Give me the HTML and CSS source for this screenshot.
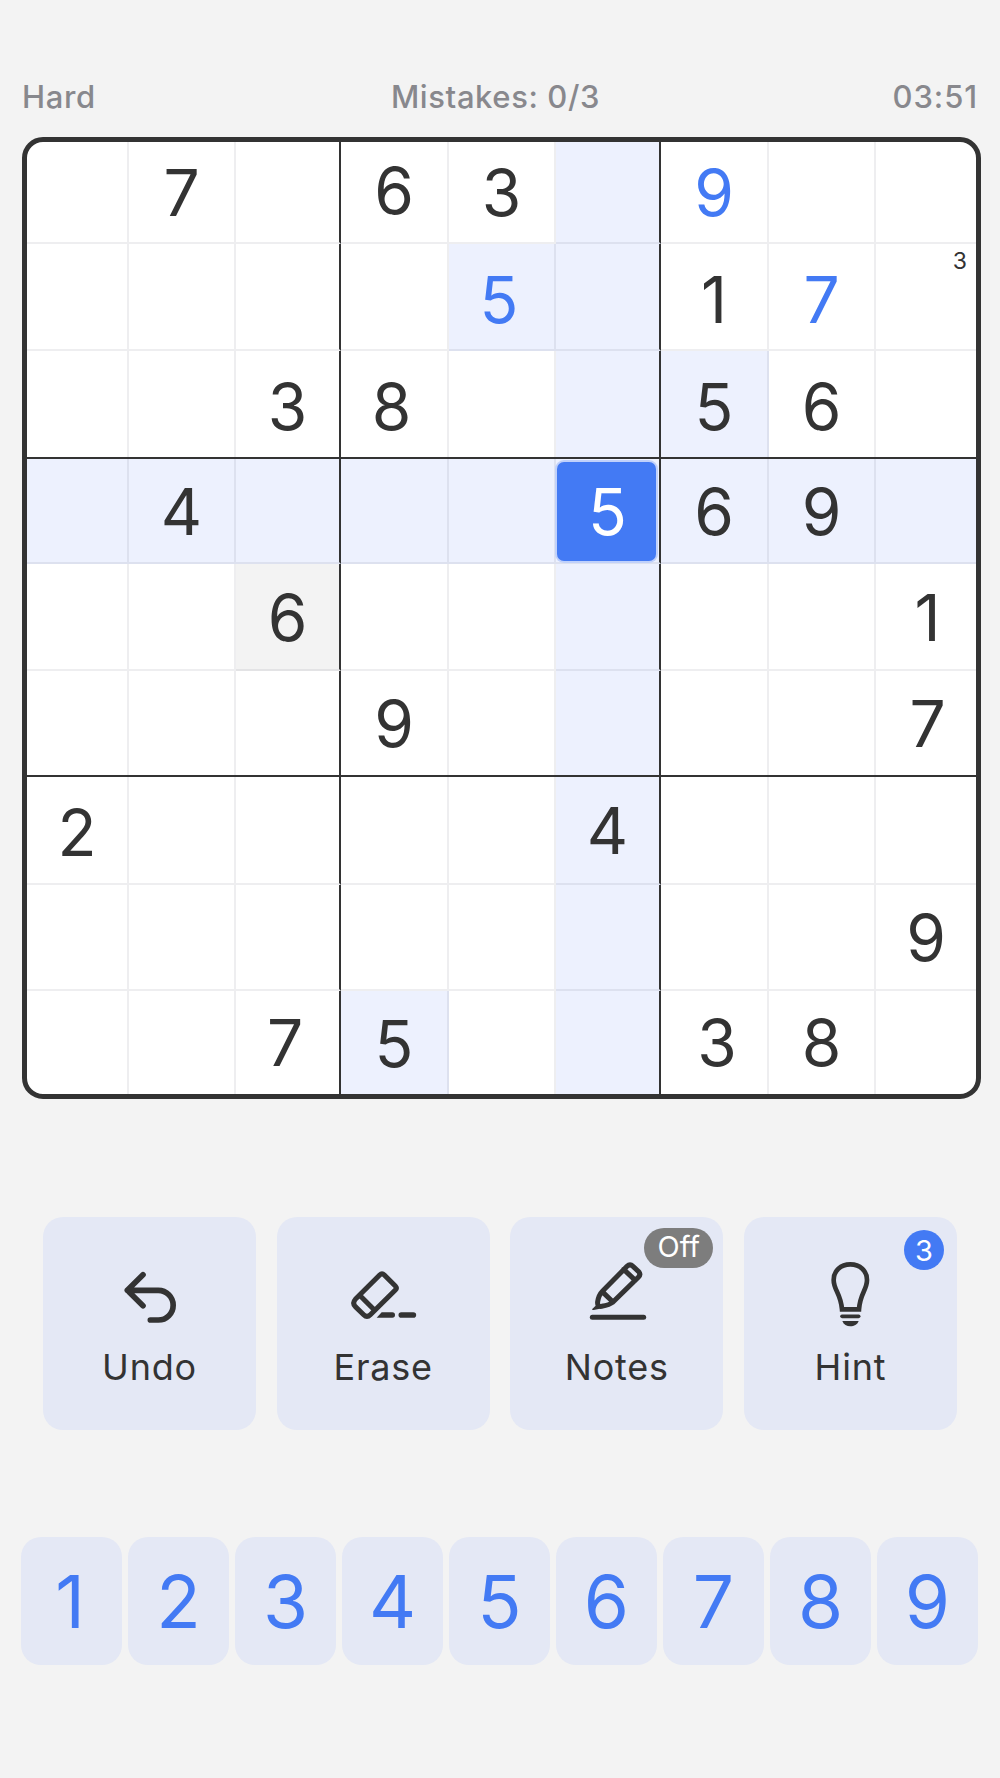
FILE: index.html
```html
<!DOCTYPE html>
<html lang="en">
  <head>
    <meta charset="utf-8">
    <title>Sudoku</title>
    <link rel="stylesheet" href="styles.css">
  </head>
  <body>
    <header class="status">
      <span class="level">Hard</span>
      <span class="mistakes">Mistakes: 0/3</span>
      <span class="timer">03:51</span>
    </header>

    <main class="board">
      <div class="row">
        <div class="cell"></div>
        <div class="cell">7</div>
        <div class="cell"></div>
        <div class="cell raised">6</div>
        <div class="cell">3</div>
        <div class="cell lit"></div>
        <div class="cell entered">9</div>
        <div class="cell"></div>
        <div class="cell"></div>
      </div>
      <div class="row low">
        <div class="cell"></div>
        <div class="cell"></div>
        <div class="cell"></div>
        <div class="cell"></div>
        <div class="cell entered lit left">5</div>
        <div class="cell lit"></div>
        <div class="cell">1</div>
        <div class="cell entered">7</div>
        <div class="cell noted"><span class="note">3</span></div>
      </div>
      <div class="row low">
        <div class="cell"></div>
        <div class="cell"></div>
        <div class="cell">3</div>
        <div class="cell left">8</div>
        <div class="cell"></div>
        <div class="cell lit"></div>
        <div class="cell lit">5</div>
        <div class="cell">6</div>
        <div class="cell"></div>
      </div>
      <div class="row">
        <div class="cell lit"></div>
        <div class="cell lit">4</div>
        <div class="cell lit"></div>
        <div class="cell lit"></div>
        <div class="cell lit"></div>
        <div class="cell lit"><span class="pick">5</span></div>
        <div class="cell lit">6</div>
        <div class="cell lit">9</div>
        <div class="cell lit"></div>
      </div>
      <div class="row">
        <div class="cell"></div>
        <div class="cell"></div>
        <div class="cell dim">6</div>
        <div class="cell"></div>
        <div class="cell"></div>
        <div class="cell lit"></div>
        <div class="cell"></div>
        <div class="cell"></div>
        <div class="cell edge">1</div>
      </div>
      <div class="row">
        <div class="cell"></div>
        <div class="cell"></div>
        <div class="cell"></div>
        <div class="cell">9</div>
        <div class="cell"></div>
        <div class="cell lit"></div>
        <div class="cell"></div>
        <div class="cell"></div>
        <div class="cell edge">7</div>
      </div>
      <div class="row">
        <div class="cell lowered">2</div>
        <div class="cell"></div>
        <div class="cell"></div>
        <div class="cell"></div>
        <div class="cell"></div>
        <div class="cell lit">4</div>
        <div class="cell"></div>
        <div class="cell"></div>
        <div class="cell"></div>
      </div>
      <div class="row">
        <div class="cell"></div>
        <div class="cell"></div>
        <div class="cell"></div>
        <div class="cell"></div>
        <div class="cell"></div>
        <div class="cell lit"></div>
        <div class="cell"></div>
        <div class="cell"></div>
        <div class="cell">9</div>
      </div>
      <div class="row last">
        <div class="cell"></div>
        <div class="cell"></div>
        <div class="cell left">7</div>
        <div class="cell lit lowered">5</div>
        <div class="cell"></div>
        <div class="cell lit"></div>
        <div class="cell right">3</div>
        <div class="cell">8</div>
        <div class="cell"></div>
      </div>
    </main>

    <nav class="tools">
      <button class="tool">
        <svg class="icon" viewBox="0 0 240 240">
          <path class="line wide" d="M99 59L52 106L99 152M52 106H145a44.5 44.5 0 0 1 0 89H121" />
        </svg>
        <span>Undo</span>
      </button>
      <button class="tool">
        <svg class="icon" viewBox="0 0 240 240">
          <path class="line" d="M110 60Q117 53 124 60L157 93Q163 99 157 105L82 179Q72 189 62 179L37 155Q27 144 37 133ZM50 121L95 166" />
          <path class="fill" d="M101 188L116 172H148a8 8 0 0 1 0 16Z" />
          <path class="line wide" d="M175 180H211" />
        </svg>
        <span>Erase</span>
      </button>
      <button class="tool">
        <svg class="icon" viewBox="0 0 240 240">
          <path class="line" d="M150 34Q159 25 168 34L184 49Q193 58 184 67L108 141Q98 150 74 154Q60 156 62 140Q65 120 77 108ZM140 43L175 76M78 112L108 141" />
          <path class="fill" d="M45 163L62 146L76 157Q62 166 47 165Z" />
          <path class="line" d="M46 187H200" />
        </svg>
        <span>Notes</span>
        <span class="badge off">Off</span>
      </button>
      <button class="tool">
        <svg class="icon" viewBox="0 0 240 240">
          <path class="line sharp" d="M96 163C92 115 71 105 71 75C71 47 92 28 121 28S171 47 171 75C171 105 150 115 147 163Z" />
          <path class="line thin" d="M96 184H146" />
          <path class="fill" d="M97 198H146C142 209 132 214 121 214S101 209 97 198Z" />
        </svg>
        <span>Hint</span>
        <span class="badge count">3</span>
      </button>
    </nav>

    <div class="keypad">
      <button class="key">1</button>
      <button class="key">2</button>
      <button class="key">3</button>
      <button class="key">4</button>
      <button class="key">5</button>
      <button class="key">6</button>
      <button class="key">7</button>
      <button class="key">8</button>
      <button class="key">9</button>
    </div>
  </body>
</html>
```
FILE: styles.css
```css
* {
  box-sizing: border-box;
}

body {
  margin: 0;
  height: 1778px;
  padding: 76px 21px 0 22px;
  background-color: #f3f3f3;
  color: #333333;
  font-family: Inter, "Liberation Sans", sans-serif;
  overflow: hidden;
}

button {
  border: 0;
  padding: 0;
  font: inherit;
  color: inherit;
}

.status {
  display: grid;
  grid-template-columns: 200px 1fr 200px;
  height: 61px;
  padding-right: 1px;
  color: #88888d;
  font-size: 31px;
  font-weight: 500;
  line-height: 41px;
  letter-spacing: 0.6px;
}

.mistakes {
  text-align: center;
  padding-right: 9px;
}

.timer {
  text-align: right;
  letter-spacing: 0.9px;
}

/* board */
.board {
  display: grid;
  grid-template-rows: 102px 107px 108px 105px 107px 106px 108px 106px 103px;
  width: 959px;
  border: 5px solid #333333;
  border-radius: 21px;
  background-color: #ffffff;
  overflow: hidden;
}

.row {
  display: grid;
  grid-template-columns: 102px 107px 105px 108px 107px 105px 108px 107px 100px;
}

.cell {
  display: flex;
  align-items: center;
  justify-content: center;
  padding-top: 2px;
  border-right: 2px solid rgba(40, 40, 60, 0.08);
  border-bottom: 2px solid rgba(40, 40, 60, 0.08);
  font-size: 64px;
  line-height: 64px;
}

.cell:nth-child(3),
.cell:nth-child(6) {
  border-right-color: #333333;
}

.cell:last-child {
  border-right: 0;
}

/* box edges run the full width, so the row draws them */
.row:nth-child(3),
.row:nth-child(6) {
  border-bottom: 2px solid #333333;
}

.row:nth-child(3) .cell,
.row:nth-child(6) .cell,
.row:last-child .cell {
  border-bottom: 0;
}

.low .cell {
  padding-top: 6px;
}

.last .cell {
  padding-top: 0;
}

.lit {
  background-color: #edf1fe;
}

.dim {
  background-color: #f3f3f3;
}

.entered {
  color: #437af4;
}

.left {
  padding-right: 5px;
}

.right {
  padding-left: 6px;
}

.edge {
  padding-left: 3px;
}

.raised {
  padding-top: 0;
  padding-bottom: 2px;
}

.lowered {
  padding-top: 6px;
}

.last .lowered {
  padding-top: 3px;
}

.low .noted {
  align-items: flex-start;
  justify-content: flex-end;
  padding: 6px 9px 0 0;
}

.note {
  font-size: 23px;
  line-height: 23px;
}

.pick {
  display: flex;
  align-items: center;
  justify-content: center;
  width: 99px;
  height: 99px;
  margin-right: 2px;
  padding-left: 2px;
  border-radius: 7px;
  background-color: #437af4;
  box-shadow: 0 0 0 2px #c0d1fb;
  color: #ffffff;
}

/* tools */
.tools {
  display: grid;
  grid-template-columns: repeat(4, 213px);
  justify-content: space-between;
  width: 914px;
  margin: 118px 0 0 21px;
}

.tool {
  position: relative;
  display: flex;
  flex-direction: column;
  align-items: center;
  height: 213px;
  padding-top: 38px;
  border-radius: 20px;
  background-color: #e4e8f5;
  font-size: 36px;
  line-height: 44px;
  letter-spacing: 0.8px;
}

.icon {
  width: 80px;
  height: 80px;
  margin-bottom: 10px;
}

.line {
  fill: none;
  stroke: #333333;
  stroke-width: 15;
  stroke-linecap: round;
  stroke-linejoin: round;
}

.wide {
  stroke-width: 17;
}

.thin {
  stroke-width: 11;
}

.sharp {
  stroke-width: 14;
  stroke-linejoin: miter;
}

.fill {
  fill: #333333;
}

.badge {
  position: absolute;
  height: 40px;
  border-radius: 20px;
  color: #ffffff;
  font-size: 29px;
  line-height: 38px;
  letter-spacing: 0;
  text-align: center;
}

.off {
  top: 11px;
  right: 10px;
  width: 69px;
  background-color: #7d7d7d;
}

.count {
  top: 13px;
  right: 13px;
  width: 40px;
  line-height: 41px;
  background-color: #437af4;
}

/* keypad */
.keypad {
  display: grid;
  grid-template-columns: repeat(9, 101px);
  justify-content: space-between;
  width: 957px;
  margin: 107px 0 0 -1px;
}

.key {
  height: 128px;
  padding-top: 2px;
  border-radius: 20px;
  background-color: #e4e8f5;
  color: #437af4;
  font-size: 73px;
  line-height: 126px;
}

.key:first-child {
  padding-right: 3px;
}
```
